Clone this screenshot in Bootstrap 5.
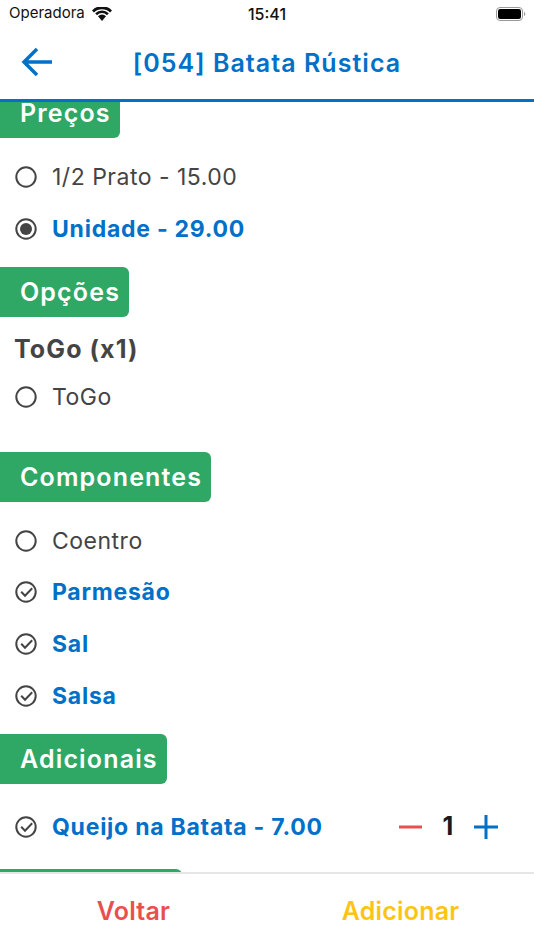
<!DOCTYPE html>
<html lang="pt">
<head>
<meta charset="utf-8">
<title>Batata Rústica</title>
<link href="https://cdn.jsdelivr.net/npm/bootstrap@5.3.0/dist/css/bootstrap.min.css" rel="stylesheet">
<style>
html,body{height:100%;margin:0;overflow:hidden;background:#fff;font-family:Inter,"Liberation Sans",sans-serif}
.app-shell{height:950px}
.status-bar{height:27px;padding:0 8px 0 9px;font-size:15px;color:#111;position:relative}
.status-time{position:absolute;left:0;right:0;top:2px;text-align:center;font-weight:500;font-size:16px}
.wifi-ico{margin-left:7px}
.app-header{height:75px;border-bottom:3px solid #0070c9;position:relative}
.back-btn{position:absolute;left:20px;top:19px;line-height:0}
.head-title{color:#0070c9;font-size:25px;font-weight:600;letter-spacing:1.05px;padding-top:1px}
.scroll-pane{height:770px;overflow:hidden}
.scroll-inner{margin-top:-14px}
.sec-tag{display:inline-block;height:50px;line-height:50px;background:#2fa866;color:#fff;font-size:25px;font-weight:600;letter-spacing:1.15px;padding:0 9px 0 20px;border-radius:0 6px 6px 0;vertical-align:top}
.tag-blank{width:182px}
.tag-wrap{height:50px}
.opt-row{height:52px;padding-left:15px;font-size:23px;color:#444;letter-spacing:.5px}
.row-tight{height:51px;padding-top:1px}
.opt-row svg{flex:none;margin-right:15px}
.opt-row.is-on{color:#0070c9;font-weight:700;letter-spacing:.75px}
.group-title{font-size:25px;font-weight:700;color:#444;padding-left:14px;height:43px;line-height:42px;letter-spacing:1.1px;margin-top:11px}
.qty-box{margin-left:auto;width:136px;padding-right:36px}
.qty-num{font-size:25px;font-weight:700;color:#1a1a1a;letter-spacing:0}
.app-footer{height:78px;border-top:2px solid #e6e6e6}
.foot-btn{font-size:25px;font-weight:600;background:none;border:0;padding:0;letter-spacing:.2px}
.foot-back{color:#ea4f50}
.foot-add{color:#fdc414}
.gap-after{margin-bottom:13px}
.gap-after-lg{margin-bottom:17px}
.gap-before{margin-top:12px}
.gap-before-lg{margin-top:29px}
.gap-before-md{margin-top:16px}
</style>
</head>
<body>
<div class="app-shell d-flex flex-column">
  <div class="status-bar d-flex align-items-center">
    <span>Operadora</span>
    <svg class="wifi-ico" width="20" height="14" viewBox="0 0 20 14"><path fill="#111" d="M0 3.400A14 14 0 0 1 20 3.400L18 5.400A11.500 11.500 0 0 0 2 5.400zM3.200 6.300A9.600 9.600 0 0 1 16.800 6.300L15 8.200A7 7 0 0 0 5 8.200zM6 9.200A5.700 5.700 0 0 1 14 9.200L10 14z"/></svg>
    <span class="status-time">15:41</span>
    <svg class="ms-auto" width="30" height="14" viewBox="0 0 30 14"><rect x=".5" y=".5" width="26" height="13" rx="3.500" fill="none" stroke="#999"/><rect x="2" y="2" width="23" height="10" rx="2.200" fill="#000"/><path d="M28 5v4c.8-.3 1.300-1 1.300-2s-.5-1.700-1.300-2z" fill="#999"/></svg>
  </div>
  <header class="app-header d-flex align-items-center justify-content-center">
    <a class="back-btn" href="#" aria-label="Voltar"><svg width="34" height="34" viewBox="0 0 34 34" fill="none" stroke="#0070c9" stroke-width="3.500"><path d="M32 16H4M17 3 4 16l13 13"/></svg></a>
    <div class="head-title">[054] Batata Rústica</div>
  </header>
  <main class="scroll-pane flex-grow-1">
    <div class="scroll-inner">
      <div class="tag-wrap gap-after"><span class="sec-tag">Preços</span></div>
      <div class="opt-row d-flex align-items-center"><svg width="22" height="22" viewBox="0 0 22 22"><circle cx="11" cy="11" r="9.700" fill="none" stroke="#444" stroke-width="2"/></svg>1/2 Prato - 15.00</div>
      <div class="opt-row is-on d-flex align-items-center"><svg width="22" height="22" viewBox="0 0 22 22"><circle cx="11" cy="11" r="9.700" fill="none" stroke="#444" stroke-width="2"/><circle cx="11" cy="11" r="6" fill="#444"/></svg>Unidade - 29.00</div>

      <div class="tag-wrap gap-before"><span class="sec-tag">Opções</span></div>
      <div class="group-title">ToGo (x1)</div>
      <div class="opt-row d-flex align-items-center"><svg width="22" height="22" viewBox="0 0 22 22"><circle cx="11" cy="11" r="9.700" fill="none" stroke="#444" stroke-width="2"/></svg>ToGo</div>

      <div class="tag-wrap gap-before-lg gap-after"><span class="sec-tag">Componentes</span></div>
      <div class="opt-row row-tight d-flex align-items-center"><svg width="22" height="22" viewBox="0 0 22 22"><circle cx="11" cy="11" r="9.700" fill="none" stroke="#444" stroke-width="2"/></svg>Coentro</div>
      <div class="opt-row is-on d-flex align-items-center"><svg width="22" height="22" viewBox="0 0 22 22" fill="none" stroke="#444" stroke-width="2"><circle cx="11" cy="11" r="9.700"/><path d="M6.200 10.800 10 14.700 17.200 7.200"/></svg>Parmesão</div>
      <div class="opt-row is-on d-flex align-items-center"><svg width="22" height="22" viewBox="0 0 22 22" fill="none" stroke="#444" stroke-width="2"><circle cx="11" cy="11" r="9.700"/><path d="M6.200 10.800 10 14.700 17.200 7.200"/></svg>Sal</div>
      <div class="opt-row is-on d-flex align-items-center"><svg width="22" height="22" viewBox="0 0 22 22" fill="none" stroke="#444" stroke-width="2"><circle cx="11" cy="11" r="9.700"/><path d="M6.200 10.800 10 14.700 17.200 7.200"/></svg>Salsa</div>

      <div class="tag-wrap gap-before gap-after-lg"><span class="sec-tag">Adicionais</span></div>
      <div class="opt-row is-on d-flex align-items-center"><svg width="22" height="22" viewBox="0 0 22 22" fill="none" stroke="#444" stroke-width="2"><circle cx="11" cy="11" r="9.700"/><path d="M6.200 10.800 10 14.700 17.200 7.200"/></svg>Queijo na Batata - 7.00
        <div class="qty-box d-flex align-items-center justify-content-between">
          <svg class="m-0" width="24" height="24" viewBox="0 0 24 24"><path d="M1 12h23" stroke="#ea4f50" stroke-width="3"/></svg>
          <span class="qty-num">1</span>
          <svg class="m-0" width="24" height="24" viewBox="0 0 24 24"><path d="M0 12h24M12 0v24" stroke="#0070c9" stroke-width="3"/></svg>
        </div>
      </div>
      <div class="tag-wrap gap-before-md"><span class="sec-tag tag-blank"></span></div>
    </div>
  </main>
  <footer class="app-footer d-flex align-items-center">
    <div class="w-50 text-center"><button class="foot-btn foot-back">Voltar</button></div>
    <div class="w-50 text-center"><button class="foot-btn foot-add">Adicionar</button></div>
  </footer>
</div>
</body>
</html>
